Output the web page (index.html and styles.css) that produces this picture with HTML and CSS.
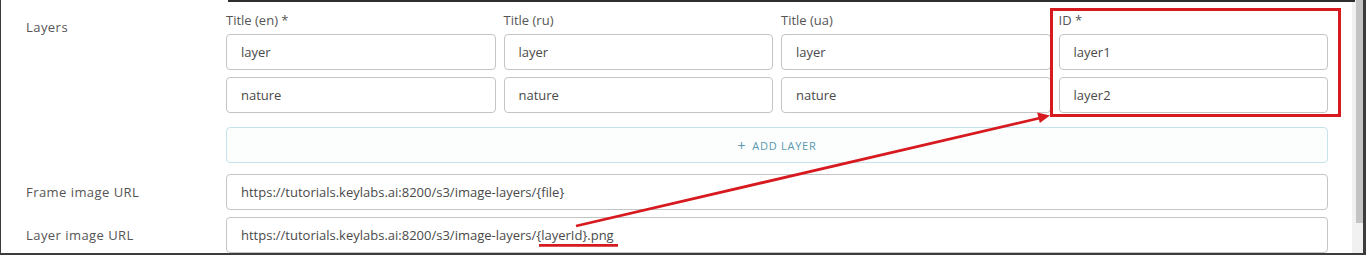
FILE: index.html
```html
<!DOCTYPE html>
<html lang="en">
<head>
<meta charset="utf-8">
<title>Layers settings</title>
<link rel="stylesheet" href="styles.css">
</head>
<body>
<div class="page">
  <div class="frame">
    <div class="form">
      <div class="row">
        <div class="label label-top">Layers</div>
        <div class="field">
          <div class="layers-grid">
            <div class="col-label">Title (en) *</div>
            <div class="col-label">Title (ru)</div>
            <div class="col-label">Title (ua)</div>
            <div class="col-label">ID *</div>
            <div class="input">layer</div>
            <div class="input">layer</div>
            <div class="input">layer</div>
            <div class="input">layer1</div>
            <div class="input">nature</div>
            <div class="input">nature</div>
            <div class="input">nature</div>
            <div class="input">layer2</div>
          </div>
          <div class="add-btn"><span class="plus">+</span>ADD LAYER</div>
        </div>
      </div>
      <div class="row row-frame">
        <div class="label">Frame image URL</div>
        <div class="input">https://tutorials.keylabs.ai:8200/s3/image-layers/{file}</div>
      </div>
      <div class="row row-layer">
        <div class="label">Layer image URL</div>
        <div class="input">https://tutorials.keylabs.ai:8200/s3/image-layers/{layerId}.png</div>
      </div>
    </div>
    <div class="scrollbar"><div class="thumb"></div></div>
  </div>
  <svg class="annot" width="1366" height="256" viewBox="0 0 1366 256">
    <rect x="1051.5" y="9.5" width="288" height="106" fill="none" stroke="#d61a1f" stroke-width="3"/>
    <line x1="576" y1="226" x2="1040" y2="118" stroke="#d61a1f" stroke-width="2.8"/>
    <polygon points="1050,115.5 1037.2,112.4 1039.8,123" fill="#d61a1f"/>
    <line x1="539" y1="245.3" x2="618" y2="245.3" stroke="#d61a1f" stroke-width="2.8"/>
  </svg>
</div>
</body>
</html>
```
FILE: styles.css
```css
* { box-sizing: border-box; }
html, body { margin: 0; background: #fff; }
body {
  font-family: "Open Sans", "Liberation Sans", sans-serif;
  font-size: 13px;
  color: #4a4a4a;
}
.page { position: relative; width: 1366px; height: 256px; overflow: hidden; }
.frame {
  position: relative;
  width: 1366px;
  height: 255px;
  display: flex;
  border-left: 1px solid #3c3c3c;
  border-right: 3px solid #3c3c3c;
  border-bottom: 2px solid #3c3c3c;
}
.frame::before {
  content: "";
  position: absolute;
  top: 0;
  left: 227px;
  right: 8px;
  height: 2px;
  background: #2e2e2e;
}
.form { flex: 1; padding-top: 12px; }
.scrollbar {
  width: 11px;
  background: #f1f1f1;
  display: flex;
  justify-content: flex-end;
}
.thumb { width: 7px; height: 223px; background: #c4c4c4; }
.row { display: grid; grid-template-columns: 225px 1102px; }
.label {
  padding-left: 25px;
  line-height: 16px;
  color: #555;
  letter-spacing: 0.45px;
  align-self: center;
}
.label-top { align-self: start; padding-top: 7px; }
.layers-grid {
  display: grid;
  grid-template-columns: repeat(4, 1fr);
  column-gap: 8px;
  row-gap: 7px;
}
.col-label { line-height: 16px; margin-bottom: -1px; color: #555; }
.input {
  height: 36px;
  border: 1px solid #c4c4c4;
  border-radius: 4px;
  padding: 0 14px;
  display: flex;
  align-items: center;
  background: #fff;
  white-space: nowrap;
}
.add-btn {
  margin-top: 14px;
  height: 36px;
  border: 1px solid #c6e2eb;
  border-radius: 4px;
  display: flex;
  align-items: center;
  justify-content: center;
  font-size: 11px;
  letter-spacing: 0.75px;
  color: #5b98ae;
  background: #fcfefe;
}
.plus { font-size: 14px; margin-right: 6px; }
.row-frame { margin-top: 11px; }
.row-layer { margin-top: 7px; }
.annot { position: absolute; top: 0; left: 0; pointer-events: none; }
```
